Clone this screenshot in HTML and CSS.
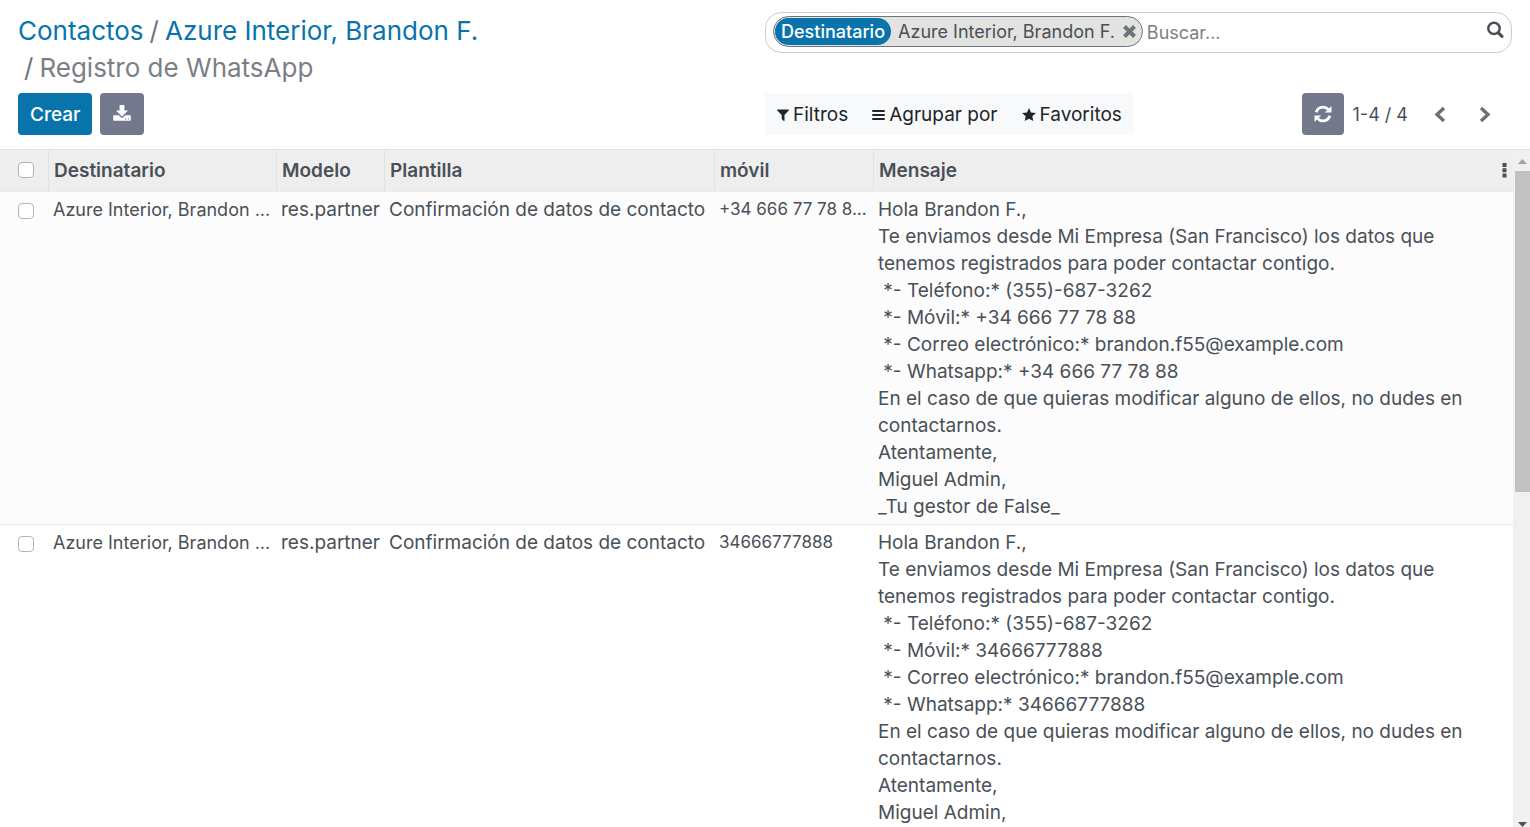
FILE: index.html
```html
<!DOCTYPE html>
<html lang="es">
<head>
<meta charset="utf-8">
<title>Registro de WhatsApp</title>
<link rel="stylesheet" href="styles.css">
</head>
<body>
<header class="panel">
  <nav class="crumbs" aria-label="Ruta">
    <ol>
      <li><a href="#">Contactos</a></li>
      <li><a href="#">Azure Interior, Brandon F.</a></li>
      <li class="current">Registro de WhatsApp</li>
    </ol>
  </nav>
  <div class="search" role="search">
    <div class="facet">
      <span class="facet-label">Destinatario</span>
      <span class="facet-value">Azure Interior, Brandon F.</span>
      <button class="facet-remove" aria-label="Quitar">
        <svg width="13" height="13" viewBox="0 0 13 13"><path d="M1.500 1.500L11.500 11.500M11.500 1.500L1.500 11.500" stroke="currentColor" stroke-width="4" fill="none"/></svg>
      </button>
    </div>
    <input class="search-input" type="text" placeholder="Buscar..." aria-label="Buscar">
    <button class="search-go" aria-label="Buscar">
      <svg width="18" height="18" viewBox="0 0 18 18"><circle cx="8" cy="7.400" r="5.700" fill="none" stroke="currentColor" stroke-width="2.500"/><path d="M12.200 11.600L16 15.400" stroke="currentColor" stroke-width="3" stroke-linecap="round"/></svg>
    </button>
  </div>
  <div class="actions">
    <button class="btn primary">Crear</button>
    <button class="btn secondary" aria-label="Exportar">
      <svg width="18" height="18" viewBox="0 0 18 18"><path fill="currentColor" d="M6.600 0h4.800v5.500H15L9 11.400 3 5.500h3.600z"/><path fill="currentColor" fill-rule="evenodd" d="M1 10.200h4.600L9 13.300l3.400-3.100H17a.8.8 0 0 1 .8.8v4a.8.8 0 0 1-.8.800H1a.8.8 0 0 1-.8-.8v-4a.8.8 0 0 1 .8-.800zM12 13.400v1h1.200v-1zM14.800 13.400v1H16v-1z"/></svg>
    </button>
  </div>
  <div class="tools">
    <div class="menus">
      <button class="menu"><svg width="12" height="13" viewBox="0 0 12 13"><path fill="currentColor" d="M.6 1.500h10.800q.9.300.3 1L7.500 7V12.500q-.1.900-.8.500L4.700 11.100V7L.3 2.500Q-.2 1.700.6 1.500z"/></svg>Filtros</button>
      <button class="menu"><svg width="13" height="13" viewBox="0 0 13 13"><path stroke="currentColor" stroke-width="2" stroke-linecap="round" d="M1 3h11M1 7h11M1 11h11"/></svg>Agrupar por</button>
      <button class="menu"><svg width="14" height="13" viewBox="0 0 14 13"><path fill="currentColor" d="M7 0l2 4.400 4.900.600-3.600 3.300 1 4.700L7 10.700 2.700 13l1-4.700L.1 5 5 4.400z"/></svg>Favoritos</button>
    </div>
    <div class="pager">
      <button class="btn secondary refresh" aria-label="Actualizar">
        <svg width="18" height="18" viewBox="0 0 17 17"><g fill="none" stroke="currentColor" stroke-width="2.600"><path d="M2 6.800C3.200 3.400 5.600 2 8.500 2c2 0 3.700.8 4.900 2.200"/><path d="M15 10.200C13.800 13.600 11.400 15 8.500 15c-2 0-3.700-.8-4.900-2.200"/></g><path fill="currentColor" d="M16.500 1v6.200h-6.200zM.5 16V9.800h6.200z"/></svg>
      </button>
      <span class="count">1-4 / 4</span>
      <button class="step" aria-label="Anterior"><svg width="12" height="17" viewBox="0 0 12 17"><path d="M10 2L3 8.500l7 6.500" fill="none" stroke="currentColor" stroke-width="3.400"/></svg></button>
      <button class="step" aria-label="Siguiente"><svg width="12" height="17" viewBox="0 0 12 17"><path d="M2 2l7 6.500L2 15" fill="none" stroke="currentColor" stroke-width="3.400"/></svg></button>
    </div>
  </div>
</header>
<main class="list">
  <div class="table-area">
    <table class="records">
      <colgroup><col class="c-check"><col class="c-dest"><col class="c-model"><col class="c-tpl"><col class="c-mobile"><col></colgroup>
      <thead>
        <tr>
          <th><input type="checkbox" aria-label="Seleccionar todo"></th>
          <th>Destinatario</th><th>Modelo</th><th>Plantilla</th><th>móvil</th>
          <th><div class="last-head">Mensaje<button class="dots" aria-label="Columnas"><svg width="5" height="15" viewBox="0 0 5 15"><path fill="currentColor" d="M.5 0h4v4h-4zM.5 5.300h4v4h-4zM.5 10.600h4v4h-4z"/></svg></button></div></th>
        </tr>
      </thead>
      <tbody>
        <tr>
          <td><input type="checkbox" aria-label="Seleccionar registro 1"></td>
          <td class="recipient">Azure Interior, Brandon ...</td><td>res.partner</td><td>Confirmación de datos de contacto</td><td class="mobile">+34 666 77 78 8...</td>
          <td class="message">Hola Brandon F.,
Te enviamos desde Mi Empresa (San Francisco) los datos que tenemos registrados para poder contactar contigo.
 *- Teléfono:* (355)-687-3262
 *- Móvil:* +34 666 77 78 88
 *- Correo electrónico:* brandon.f55@example.com
 *- Whatsapp:* +34 666 77 78 88
En el caso de que quieras modificar alguno de ellos, no dudes en contactarnos.
Atentamente,
Miguel Admin,
_Tu gestor de False_</td>
        </tr>
        <tr>
          <td><input type="checkbox" aria-label="Seleccionar registro 2"></td>
          <td class="recipient">Azure Interior, Brandon ...</td><td>res.partner</td><td>Confirmación de datos de contacto</td><td class="mobile">34666777888</td>
          <td class="message">Hola Brandon F.,
Te enviamos desde Mi Empresa (San Francisco) los datos que tenemos registrados para poder contactar contigo.
 *- Teléfono:* (355)-687-3262
 *- Móvil:* 34666777888
 *- Correo electrónico:* brandon.f55@example.com
 *- Whatsapp:* 34666777888
En el caso de que quieras modificar alguno de ellos, no dudes en contactarnos.
Atentamente,
Miguel Admin,</td>
        </tr>
      </tbody>
    </table>
  </div>
  <div class="scrollbar" aria-hidden="true">
    <svg width="9" height="5" viewBox="0 0 9 5"><path fill="#a3a3a3" d="M0 5L4.500 0 9 5z"/></svg>
    <div class="thumb"></div>
    <svg class="down" width="9" height="5" viewBox="0 0 9 5"><path fill="#505050" d="M0 0h9L4.500 5z"/></svg>
  </div>
</main>
</body>
</html>
```
FILE: styles.css
```css
* { box-sizing: border-box; }
body {
  margin: 0;
  height: 100vh;
  display: flex;
  flex-direction: column;
  overflow: hidden;
  background: #fff;
  color: #495057;
  font: 400 19px/27px Inter, "Open Sans", sans-serif;
}
button, input { font: inherit; color: inherit; }
button { border: 0; padding: 0; background: none; cursor: pointer; }
svg { display: block; flex: none; }

.panel {
  display: grid;
  grid-template-columns: 1fr 1fr;
  row-gap: 7px;
  padding: 12px 18px 14px 18px;
}
.crumbs { font-size: 26px; line-height: 37px; padding-right: 240px; }
.crumbs ol { display: flex; flex-wrap: wrap; margin: 0; padding: 0; list-style: none; white-space: nowrap; }
.crumbs li + li::before { content: "/"; padding: 0 6px; color: #6c757d; }
.crumbs a { color: #0874ab; text-decoration: none; }
.current { color: #7b7f84; }

.search {
  display: flex;
  align-items: flex-start;
  height: 41px;
  padding: 3px 7px;
  border: 1px solid #ccc;
  border-radius: 16px;
  font-size: 18px;
}
.facet {
  display: flex;
  align-items: center;
  height: 31px;
  padding: 0 6px 0 1px;
  border: 1px solid #6c757d;
  border-radius: 16px;
  background: #e2e2e0;
  white-space: nowrap;
}
.facet-label { padding: 0 6px; border-radius: 14px; background: #0874ab; color: #fff; font-weight: 500; }
.facet-value { padding: 0 8px 0 7px; }
.facet-remove { color: #6c757d; }
.search-input { flex: 1; min-width: 0; height: 33px; padding: 0 4px; border: 0; outline: 0; background: none; }
.search-input::placeholder { color: #7b7f84; opacity: 1; }
.search-go { padding: 5px 0; }

.actions { display: flex; gap: 8px; }
.btn { display: flex; align-items: center; height: 42px; padding: 0 12px; border-radius: 4px; color: #fff; font-weight: 500; }
.primary { background: #0874ab; }
.secondary { background: #74788d; padding: 0 13px; }
.tools { display: flex; justify-content: space-between; }
.menus { display: flex; border-radius: 4px; background: #f8f9fa; color: #212529; }
.menu { display: flex; align-items: center; gap: 4px; padding: 0 12px; }
.pager { display: flex; align-items: center; font-size: 18px; }
.refresh { padding: 0 12px; }
.count { padding: 0 12px 0 9px; }
.step { padding: 0 15px 0 14px; color: #6c6f73; }
.step:last-child { padding: 0 21px 0 18px; }

.list { flex: 1; min-height: 0; display: flex; border-top: 1px solid #dde3e8; overflow: hidden; }
.table-area { flex: 1; min-width: 0; overflow: hidden; }
.records { width: 100%; table-layout: fixed; border-collapse: separate; border-spacing: 0; }
.c-check { width: 48px; }
.c-dest { width: 228px; }
.c-model { width: 108px; }
.c-tpl { width: 330px; }
.c-mobile { width: 159px; }
.records th { height: 42px; padding: 0 5px; border-left: 1px solid #dee2e6; border-bottom: 2px solid #e9ecef; background: #eee; text-align: left; font-weight: 600; }
.records td { padding: 4px 0 4px 5px; border-bottom: 1px solid #e4e8ec; vertical-align: top; white-space: nowrap; }
.records th:first-child, .records td:first-child { padding-left: 18px; border-left: 0; }
.records tbody tr:nth-child(odd) { background: #fcfcfc; }
.records .message { white-space: pre-wrap; padding-right: 30px; }
.records .recipient { font-size: 18px; }
.records .mobile { font-size: 17px; }
.last-head { display: flex; justify-content: space-between; align-items: center; padding-right: 1px; }
.records input { appearance: none; display: block; width: 16px; height: 16px; margin: 0; border: 1px solid #adb5bd; border-radius: 4px; background: #fff; }
.records td input { margin-top: 7px; }

.scrollbar { display: flex; flex-direction: column; align-items: center; width: 17px; padding: 9px 0 0 2px; background: #f0f0f0; }
.thumb { width: 100%; height: 48%; margin-top: 7px; background: #c1c1c1; }
.down { margin-top: auto; }
```
